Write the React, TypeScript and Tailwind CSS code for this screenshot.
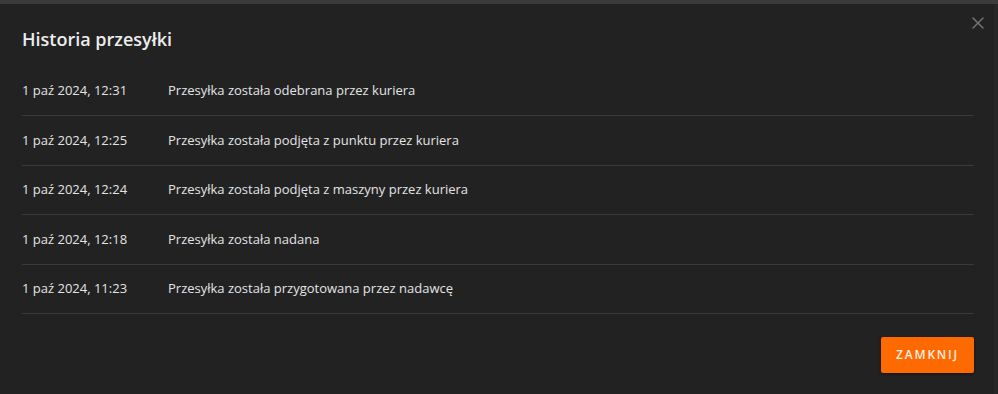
import React from "react";
import { X } from "lucide-react";

const events = [
  { date: "1 paź 2024, 12:31", text: "Przesyłka została odebrana przez kuriera" },
  { date: "1 paź 2024, 12:25", text: "Przesyłka została podjęta z punktu przez kuriera" },
  { date: "1 paź 2024, 12:24", text: "Przesyłka została podjęta z maszyny przez kuriera" },
  { date: "1 paź 2024, 12:18", text: "Przesyłka została nadana" },
  { date: "1 paź 2024, 11:23", text: "Przesyłka została przygotowana przez nadawcę" },
];

export default function App() {
  return (
    <div className="w-[998px] h-[394px] bg-[#222222] flex flex-col overflow-hidden font-['Open_Sans','Liberation_Sans',sans-serif]">
      <div className="h-1 bg-[#3b3b3b] shrink-0"></div>
      <div className="flex-1 flex">
        <div className="flex-1 flex flex-col relative">
          {/* Close */}
          <button className="absolute right-[6px] top-[9px] text-[#747474]">
            <X className="h-[20px] w-[20px]" strokeWidth={1.8} />
          </button>

          {/* Header */}
          <div className="h-[62.5px] pl-[22px] pt-[22px]">
            <h2 className="text-[18px] leading-[27px] font-semibold text-[#ededed]">Historia przesyłki</h2>
          </div>

          {/* Rows */}
          <div className="ml-[22px] mr-[20px]">
            {events.map((e) => (
              <div
                key={e.date}
                className="h-[49.5px] border-b border-[#3a3a3a] flex items-center text-[13px] text-[#e4e4e4]"
              >
                <span className="w-[146px] shrink-0">{e.date}</span>
                <span>{e.text}</span>
              </div>
            ))}
          </div>

          {/* Footer */}
          <div className="flex justify-end mr-[20px] mt-[23px]">
            <button className="w-[93px] h-[36px] bg-[#ff6a00] text-[#fdeee4] text-[12px] font-semibold tracking-[1.8px] rounded-[2px] shadow-[0_1px_3px_rgba(0,0,0,0.5)]">
              ZAMKNIJ
            </button>
          </div>
        </div>
        <div className="w-[4px] bg-[#262626] shrink-0"></div>
      </div>
    </div>
  );
}
